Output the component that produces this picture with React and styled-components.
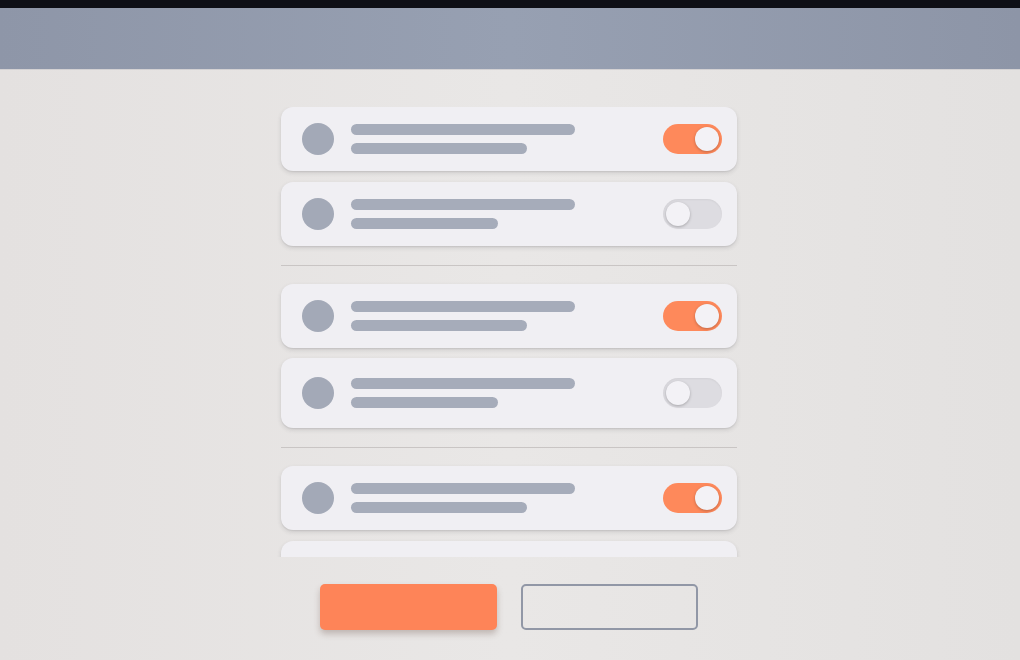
import React from 'react';
import styled, { createGlobalStyle } from 'styled-components';

const GlobalStyle = createGlobalStyle`
    html, body {
        margin: 0;
        padding: 0;
        width: 100%;
        height: 100%;
        overflow: hidden;
        font-family: "Liberation Sans", Arial, sans-serif;
    }
    #root {
        height: 100%;
    }
`;

const Page = styled.div`
    width: 100%;
    height: 100%;
    display: flex;
    flex-direction: column;
    background: linear-gradient(90deg, #e4e1e0 0%, #e9e7e6 50%, #e3e1e0 100%);
`;
const TopBar = styled.div`
    height: 8px;
    flex-shrink: 0;
    background: #0e0f16;
`;
const Header = styled.div`
    height: 61px;
    flex-shrink: 0;
    background: linear-gradient(90deg, #8e96a8 0%, #97a0b2 50%, #8d95a7 100%);
    border-bottom: 1px solid #d3d1d3;
`;
const Main = styled.div`
    display: flex;
    flex-direction: column;
    align-items: center;
    padding: 37px 2px 0 0;
`;
const List = styled.div`
    width: 456px;
    height: 450px;
    overflow: hidden;
    display: flex;
    flex-direction: column;
    padding: 0 6px;
    margin: 0 -6px;
    box-sizing: content-box;
`;
const Group = styled.div`
    display: flex;
    flex-direction: column;
    gap: ${props => props.gap || 11}px;
`;
const Divider = styled.div`
    height: 1px;
    margin: 19px 0 18px;
    background: #c9c5c4;
    flex-shrink: 0;
`;
const Card = styled.div`
    height: ${props => props.height || 64}px;
    flex-shrink: 0;
    display: flex;
    align-items: center;
    padding: 0 15px 0 21px;
    border-radius: 12px;
    background: #f0eff3;
    box-shadow: 0 2px 4px rgba(60, 60, 70, 0.16), 0 1px 1px rgba(60, 60, 70, 0.08);
`;
const Avatar = styled.div`
    width: 32px;
    height: 32px;
    border-radius: 50%;
    background: #a3a9b7;
    flex-shrink: 0;
`;
const Lines = styled.div`
    display: flex;
    flex-direction: column;
    gap: 8px;
    margin-left: 17px;
    flex: 1;
`;
const Line = styled.div`
    width: ${props => props.width}px;
    height: 11px;
    border-radius: 6px;
    background: #a6acba;
`;
const Toggle = styled.div`
    width: 59px;
    height: 30px;
    border-radius: 15px;
    display: flex;
    align-items: center;
    padding: 0 3px;
    box-sizing: border-box;
    justify-content: ${props => (props.on ? 'flex-end' : 'flex-start')};
    background: ${props => (props.on ? '#fe895b' : '#dddce1')};
    box-shadow: ${props => (props.on ? 'none' : 'inset 0 1px 2px rgba(0,0,0,0.05)')};
`;
const Knob = styled.div`
    width: 24px;
    height: 24px;
    border-radius: 50%;
    background: #f3f2f6;
    box-shadow: 0 1px 3px rgba(0, 0, 0, 0.25);
`;
const ButtonRow = styled.div`
    display: flex;
    gap: 24px;
    margin-top: 27px;
`;
const PrimaryButton = styled.button`
    width: 177px;
    height: 46px;
    border: none;
    border-radius: 5px;
    background: #fe8458;
    box-shadow: 0 4px 6px rgba(90, 60, 50, 0.28);
`;
const OutlineButton = styled.button`
    width: 177px;
    height: 46px;
    border: 2px solid #9197a6;
    border-radius: 5px;
    background: transparent;
`;

const Row = ({ on, second, height }) =>
    <Card height={height}>
        <Avatar />
        <Lines>
            <Line width={224} />
            <Line width={second} />
        </Lines>
        <Toggle on={on ? 1 : 0}>
            <Knob />
        </Toggle>
    </Card>

const App = () =>
    <Page>
        <GlobalStyle />
        <TopBar />
        <Header />
        <Main>
            <List>
                <Group>
                    <Row on second={176} />
                    <Row second={147} />
                </Group>
                <Divider />
                <Group gap={10}>
                    <Row on second={176} />
                    <Row second={147} height={70} />
                </Group>
                <Divider />
                <Group>
                    <Row on second={176} />
                    <Row second={147} />
                </Group>
            </List>
            <ButtonRow>
                <PrimaryButton />
                <OutlineButton />
            </ButtonRow>
        </Main>
    </Page>

export default App;
